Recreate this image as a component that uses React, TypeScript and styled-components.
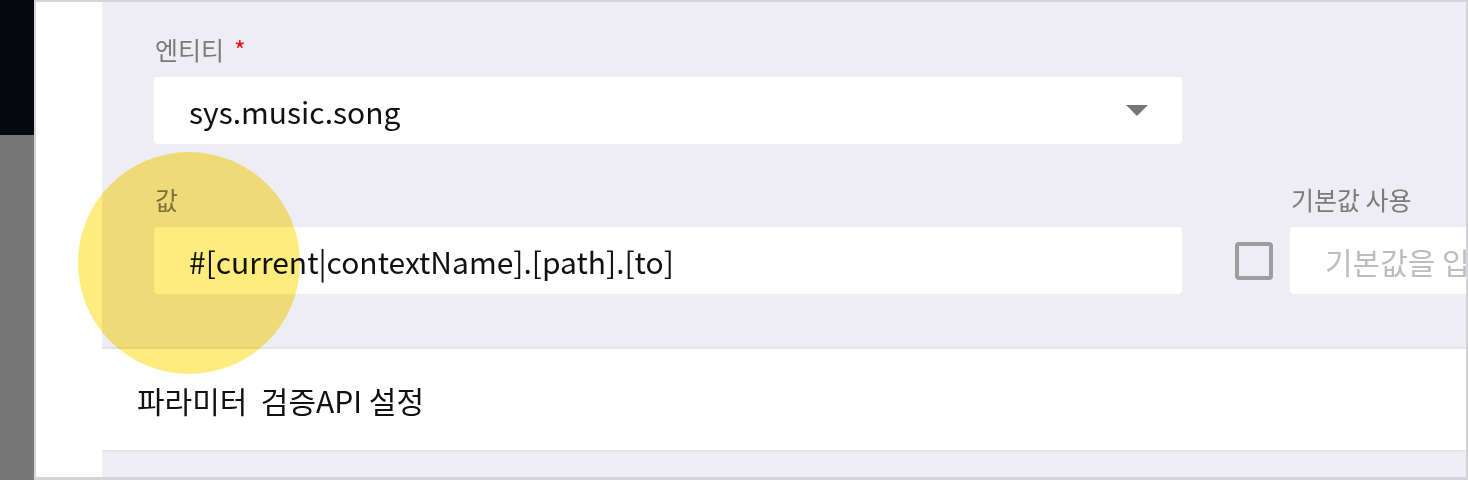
import React from "react";
import styled, { createGlobalStyle } from "styled-components";

const Global = createGlobalStyle`
  html, body { margin: 0; padding: 0; background: #ffffff; }
  body { font-family: "Noto Sans CJK KR", "Noto Sans", sans-serif; }
  * { box-sizing: border-box; }
`;

const Screen = styled.div`
  position: relative;
  display: flex;
  width: 1468px;
  height: 480px;
  overflow: hidden;
  isolation: isolate;
`;

const Backdrop = styled.div`
  width: 34px;
  flex: none;
  display: flex;
  flex-direction: column;
`;

const BackdropPart = styled.div<{ $tone: "dark" | "gray"; $h?: number }>`
  flex: ${(p) => (p.$h ? "none" : "1")};
  height: ${(p) => (p.$h ? `${p.$h}px` : "auto")};
  background: ${(p) => (p.$tone === "dark" ? "#07080d" : "#777777")};
`;

const Frame = styled.div`
  flex: 1;
  display: flex;
  border: 2px solid #d3d3d8;
  border-bottom-width: 3px;
  background: #ffffff;
  overflow: hidden;
`;

const Gutter = styled.div`
  width: 66px;
  flex: none;
  background: #ffffff;
`;

const Content = styled.div`
  flex: 1;
  display: flex;
  flex-direction: column;
  min-width: 0;
`;

const FormPanel = styled.div`
  background: #eeedf3;
  padding: 31px 0 53px 52px;
  display: flex;
  flex-direction: column;
  gap: 39px;
  overflow: hidden;
`;

const Row = styled.div`
  display: flex;
  align-items: flex-end;
`;

const Field = styled.div<{ $w?: number }>`
  display: flex;
  flex-direction: column;
  gap: 12px;
  width: ${(p) => (p.$w ? `${p.$w}px` : "auto")};
  flex: ${(p) => (p.$w ? "none" : "1")};
  min-width: 0;
`;

const Label = styled.div`
  height: 32px;
  line-height: 32px;
  font-size: 25px;
  color: #7a7a7a;
  white-space: nowrap;
  padding-left: 1px;
`;

const Required = styled.span`
  color: #f01010;
  margin-left: 10px;
`;

const Box = styled.div<{ $placeholder?: boolean }>`
  height: 67px;
  background: #ffffff;
  border-radius: 4px;
  display: flex;
  align-items: center;
  padding: 0 34px 0 35px;
  font-size: 30px;
  color: ${(p) => (p.$placeholder ? "#bdbdbd" : "#111111")};
  white-space: nowrap;
  overflow: hidden;
`;

const BoxText = styled.span`
  flex: 1;
`;

const Caret = styled.svg`
  width: 22px;
  height: 11px;
  flex: none;
`;

const CheckCell = styled.div`
  width: 108px;
  height: 67px;
  flex: none;
  display: flex;
  align-items: center;
  padding-left: 53px;
`;

const CheckBox = styled.div`
  width: 38px;
  height: 38px;
  border: 4px solid #9d9d9d;
  border-radius: 4px;
  background: transparent;
`;

const Section = styled.div`
  height: 105px;
  border-top: 2px solid #e4e4e8;
  border-bottom: 2px solid #e4e4e8;
  background: #ffffff;
  display: flex;
  align-items: center;
  padding-left: 35px;
  font-size: 30px;
  color: #111111;
  white-space: pre;
`;

const Footer = styled.div`
  flex: 1;
  background: #eeedf3;
`;

const Highlight = styled.div`
  position: absolute;
  left: 78px;
  top: 152px;
  width: 222px;
  height: 222px;
  border-radius: 50%;
  background: #ffec7e;
  mix-blend-mode: multiply;
  pointer-events: none;
`;

export default function App() {
  return (
    <>
      <Global />
      <Screen>
        <Backdrop>
          <BackdropPart $tone="dark" $h={135} />
          <BackdropPart $tone="gray" />
        </Backdrop>
        <Frame>
          <Gutter />
          <Content>
            <FormPanel>
              <Row>
                <Field $w={1028}>
                  <Label>
                    엔티티<Required>*</Required>
                  </Label>
                  <Box>
                    <BoxText>sys.music.song</BoxText>
                    <Caret viewBox="0 0 22 11">
                      <path d="M0 0 H22 L11 11 Z" fill="#767676" />
                    </Caret>
                  </Box>
                </Field>
              </Row>
              <Row>
                <Field $w={1028}>
                  <Label>값</Label>
                  <Box>
                    <BoxText>#[current|contextName].[path].[to]</BoxText>
                  </Box>
                </Field>
                <CheckCell>
                  <CheckBox />
                </CheckCell>
                <Field $w={400}>
                  <Label>기본값 사용</Label>
                  <Box $placeholder>기본값을 입력하세요</Box>
                </Field>
              </Row>
            </FormPanel>
            <Section>{"파라미터  검증API 설정"}</Section>
            <Footer />
          </Content>
        </Frame>
        <Highlight />
      </Screen>
    </>
  );
}
